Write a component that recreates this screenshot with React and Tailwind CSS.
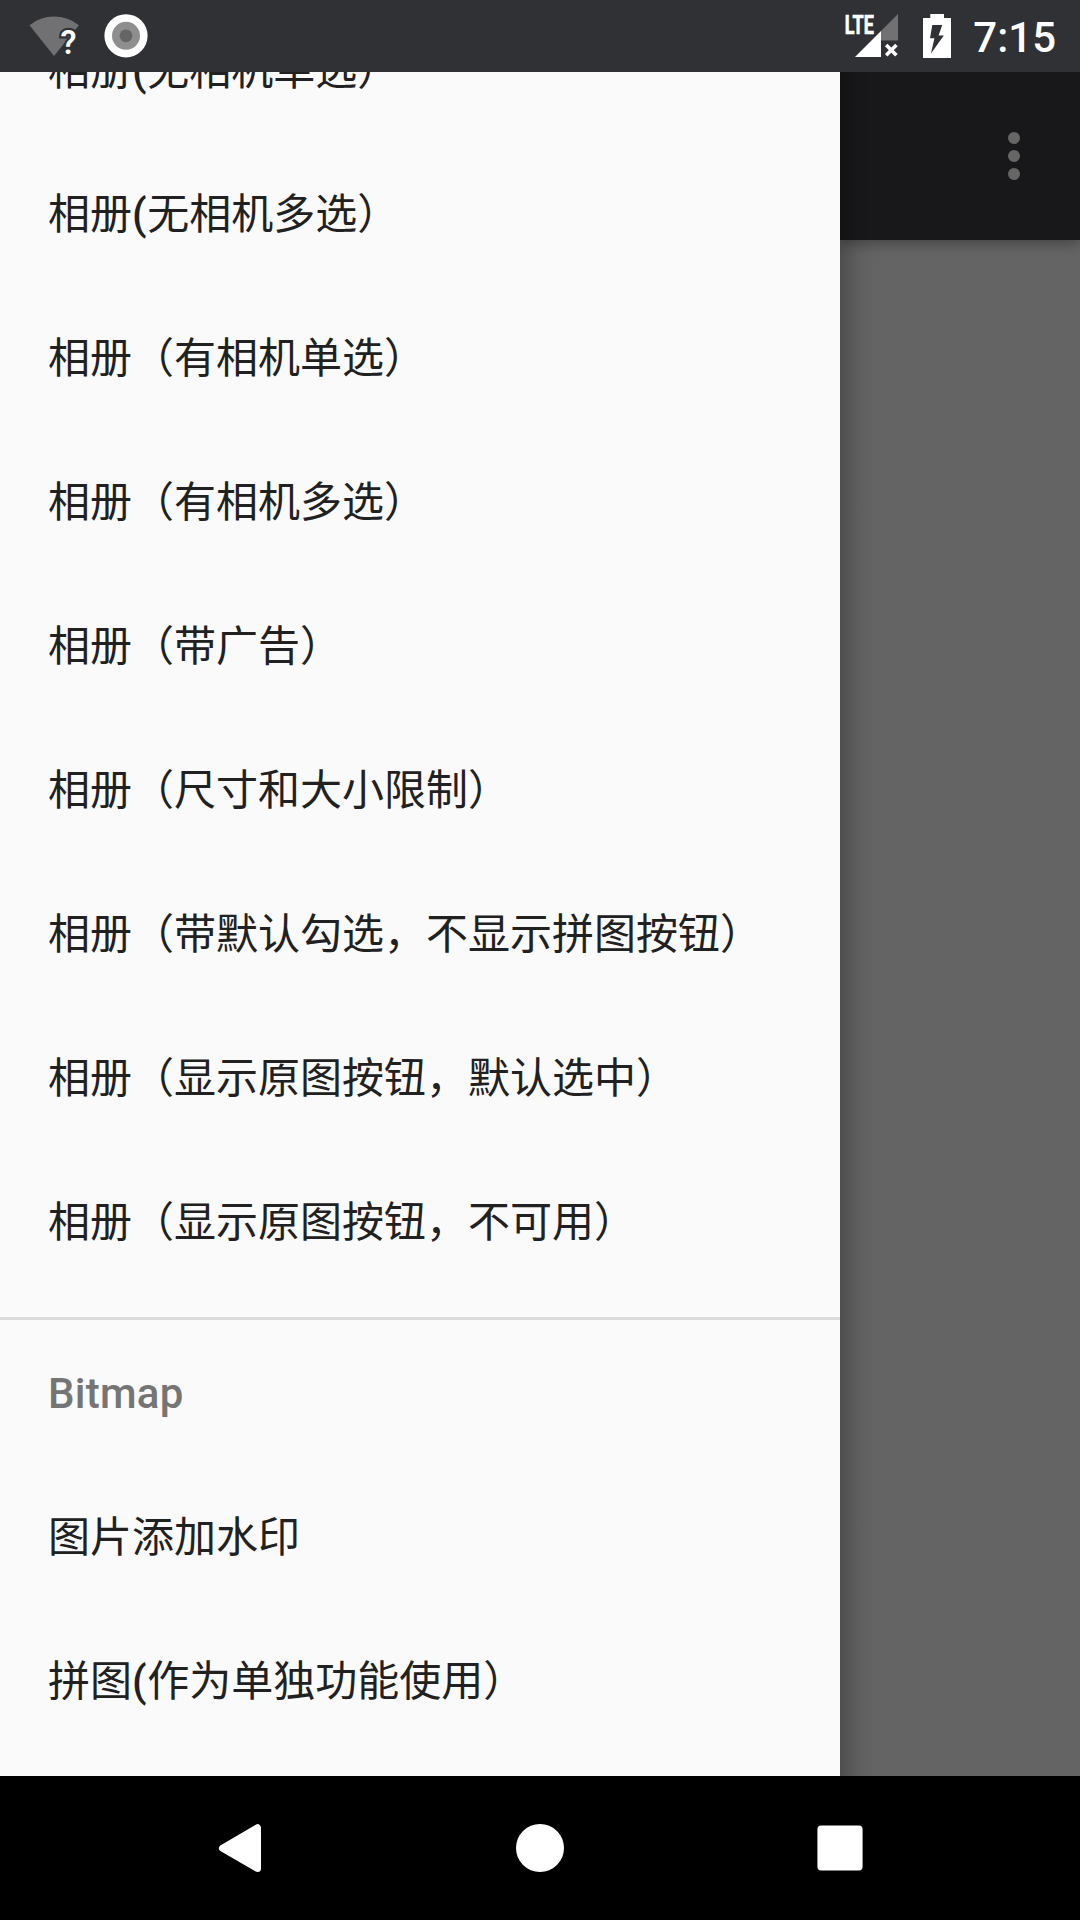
import React from "react";

const albumItems = [
  ["相册", "(", "无相机单选）"],
  ["相册", "(", "无相机多选）"],
  ["相册（有相机单选）"],
  ["相册（有相机多选）"],
  ["相册（带广告）"],
  ["相册（尺寸和大小限制）"],
  ["相册（带默认勾选，不显示拼图按钮）"],
  ["相册（显示原图按钮，默认选中）"],
  ["相册（显示原图按钮，不可用）"],
];

const bitmapItems = [["图片添加水印"], ["拼图", "(", "作为单独功能使用）"]];

function MenuItem({ parts }) {
  return (
    <li className="flex h-36 items-center whitespace-nowrap pl-12 pb-1 font-['Noto_Sans_CJK_SC',sans-serif] text-[42px] leading-[60px] text-[#212121]">
      <span>
        {parts.map((part, i) =>
          part === "(" ? (
            <span key={i} className="font-['Roboto',sans-serif] font-medium leading-none tracking-[0.6px]">
              (
            </span>
          ) : (
            part
          )
        )}
      </span>
    </li>
  );
}

function StatusBar() {
  return (
    <header className="flex h-[72px] shrink-0 items-center justify-between bg-[#303135]">
      <svg width="160" height="72" viewBox="0 0 160 72">
        <path d="M29.5 25.2Q40 16.5 54 16.5T79 25.2L54 56Z" fill="#717173" />
        <text
          x="60.6"
          y="53.8"
          fontSize="32.5"
          fontWeight="600"
          fill="#fff"
          stroke="#303135"
          strokeWidth="4.5"
          paintOrder="stroke"
          className="font-['Roboto',sans-serif]"
        >
          ?
        </text>
        <circle cx="126" cy="35.8" r="21.6" fill="#fff" />
        <circle cx="126" cy="35.8" r="14" fill="#8e8e8e" />
        <circle cx="126" cy="35.8" r="6.4" fill="#646567" />
      </svg>
      <div className="flex items-center pr-6">
        <svg width="136" height="72" viewBox="837 0 136 72">
          <text
            x="844.8"
            y="33.6"
            fontSize="26"
            fontWeight="700"
            fill="#fff"
            stroke="#fff"
            strokeWidth="0.7"
            textLength="29"
            lengthAdjust="spacingAndGlyphs"
            className="font-['Roboto',sans-serif]"
          >
            LTE
          </text>
          <path d="M881 31L898 14V40.5H881Z" fill="#717173" />
          <path d="M855 57L881 31V57Z" fill="#fff" />
          <path d="M886.2 45L896.4 55.2M896.4 45L886.2 55.2" stroke="#fff" strokeWidth="3.6" />
          <path d="M930.3 14H944V18H951V58H923V18H930.3Z" fill="#fff" />
          <path d="M932.3 25H942.2L938.6 35.5H943.8L931 53.5L934.4 38.3H930Z" fill="#303135" />
        </svg>
        <time className="pt-1 font-['Roboto',sans-serif] text-[42px] font-medium leading-none text-white">7:15</time>
      </div>
    </header>
  );
}

function NavigationBar() {
  return (
    <nav className="flex h-36 shrink-0 items-center justify-center gap-[252px] bg-black">
      <svg width="48" height="48" viewBox="0 0 48 48">
        <path d="M6.5 24.2L41.5 3.7V44.5Z" fill="#fff" stroke="#fff" strokeWidth="7" strokeLinejoin="round" />
      </svg>
      <span className="size-12 rounded-full bg-white" />
      <svg width="48" height="48" viewBox="0 0 48 48">
        <rect x="1.4" y="1.4" width="45.2" height="45.2" rx="4" fill="#fff" />
      </svg>
    </nav>
  );
}

export default function App() {
  return (
    <div className="flex h-[1920px] w-[1080px] flex-col overflow-hidden bg-black">
      <StatusBar />
      <main className="flex h-[1704px] shrink-0 overflow-hidden">
        <aside className="relative z-20 w-[840px] shrink-0 overflow-hidden bg-[#fafafa]">
          <ul className="-mt-[75px]">
            {albumItems.map((parts, i) => (
              <MenuItem key={i} parts={parts} />
            ))}
          </ul>
          <hr className="mt-6 border-t-[3px] border-[#dcdcdc]" />
          <h2 className="flex h-36 items-center pl-12 pt-[2px] font-['Roboto',sans-serif] text-[42px] font-medium tracking-[0.25px] text-[#757575]">Bitmap</h2>
          <ul>
            {bitmapItems.map((parts, i) => (
              <MenuItem key={i} parts={parts} />
            ))}
          </ul>
        </aside>
        <section className="relative flex w-60 flex-col bg-[#646464]">
          <div className="flex h-[168px] items-center justify-end bg-[#18181a] pr-[60px] shadow-[0_4px_12px_rgba(0,0,0,0.3)]">
            <div className="flex flex-col gap-1.5">
              <span className="size-3 rounded-full bg-[#666]" />
              <span className="size-3 rounded-full bg-[#666]" />
              <span className="size-3 rounded-full bg-[#666]" />
            </div>
          </div>
          <div className="absolute inset-y-0 left-0 w-9 bg-linear-to-r from-black/22 via-black/6 to-transparent" />
        </section>
      </main>
      <NavigationBar />
    </div>
  );
}
